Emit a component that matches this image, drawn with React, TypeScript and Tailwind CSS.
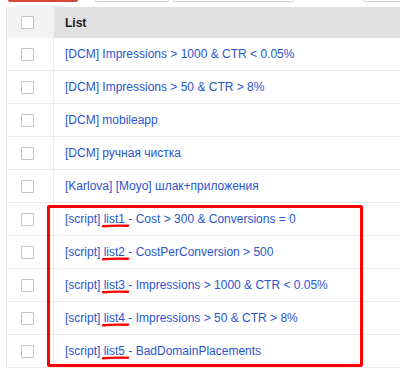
const rows = [
  { prefix: '[DCM] Impressions > 1000 & CTR < 0.05%' },
  { prefix: '[DCM] Impressions > 50 & CTR > 8%' },
  { prefix: '[DCM] mobileapp' },
  { prefix: '[DCM] ручная чистка' },
  { prefix: '[Karlova] [Moyo] шлак+приложения' },
  { prefix: '[script] ', mark: 'list1', rest: ' - Cost > 300 & Conversions = 0' },
  { prefix: '[script] ', mark: 'list2', rest: ' - CostPerConversion > 500' },
  { prefix: '[script] ', mark: 'list3', rest: ' - Impressions > 1000 & CTR < 0.05%' },
  { prefix: '[script] ', mark: 'list4', rest: ' - Impressions > 50 & CTR > 8%' },
  { prefix: '[script] ', mark: 'list5', rest: ' - BadDomainPlacements' },
]

function Checkbox() {
  return <span className="block w-[13px] h-[13px] border border-[#c6c6c6] rounded-[1px] bg-white" />
}

function Scribble() {
  // hand-drawn red underline
  return (
    <svg className="absolute left-[-3px] top-[13px]" width="30" height="6" viewBox="0 0 30 6">
      <path d="M2 3.2 C 9 2.6, 18 2.4, 27 2.8" stroke="#f00" strokeWidth="2.4" strokeLinecap="round" fill="none" />
    </svg>
  )
}

export default function App() {
  return (
    <div className="relative w-[400px] h-[370px] overflow-hidden bg-white font-['Liberation_Sans',Arial,sans-serif]">
      <div className="flex items-start h-[7px]">
        <div className="ml-[8px] w-[76px] h-[2px] bg-[#d14836] rounded-b-[2px]" />
        <div className="ml-[17px] w-[80px] h-[2px] border border-t-0 border-[#d5d5d5] rounded-b-[2px]" />
        <div className="ml-[4px] w-[131px] h-[2px] border border-t-0 border-[#d5d5d5] rounded-b-[2px]" />
        <div className="ml-[69px] w-[40px] h-[2px] border border-t-0 border-r-0 border-[#d5d5d5] rounded-bl-[2px]" />
      </div>

      <div className="ml-[6px] border-l border-[#e5e5e5]">
        <div className="flex h-[31px]">
          <div className="w-[47px] shrink-0 flex items-center pl-[14px] bg-[#f2f2f2]">
            <Checkbox />
          </div>
          <div className="flex-1 flex items-center pl-[11px] bg-[#e1e1e1] text-[12px] font-bold text-[#222]">
            List
          </div>
        </div>

        {rows.map((r) => (
          <div key={r.prefix + (r.mark ?? '')} className="flex h-[33px] border-b border-[#ebebeb]">
            <div className="w-[47px] shrink-0 flex items-center pl-[14px] border-r border-[#ebebeb]">
              <Checkbox />
            </div>
            <div className="flex-1 flex items-center pl-[11px] text-[12px] text-[#2a55cf] whitespace-pre">
              <span>{r.prefix}</span>
              {r.mark && (
                <span className="relative">
                  {r.mark}
                  <Scribble />
                </span>
              )}
              {r.rest && <span>{r.rest}</span>}
            </div>
          </div>
        ))}
      </div>

      <div className="absolute left-[47px] top-[205px] w-[316px] h-[162px] border-[3px] border-[#ff0000] rounded-[2px]" />
    </div>
  )
}
